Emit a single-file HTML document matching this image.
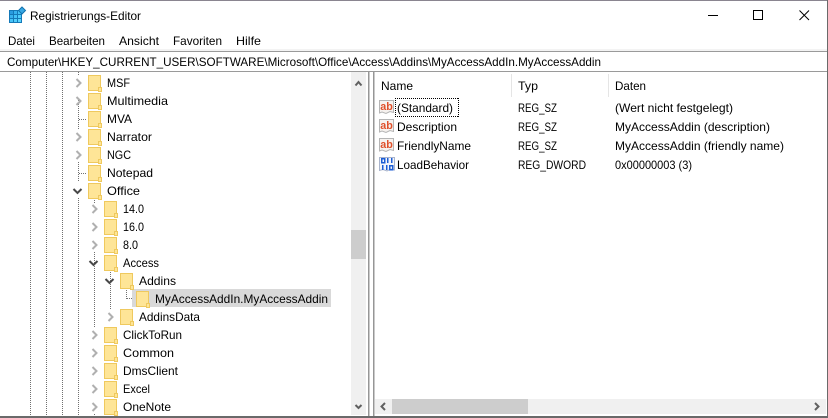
<!DOCTYPE html>
<html><head><meta charset="utf-8"><title>Registrierungs-Editor</title>
<style>html,body{margin:0;padding:0;background:#fff;width:828px;height:418px;overflow:hidden}
svg{display:block}text{font-family:"Liberation Sans",sans-serif;font-size:12px;fill:#000}</style></head><body>
<svg xmlns="http://www.w3.org/2000/svg" width="828" height="418" viewBox="0 0 828 418">
<defs>
<g id="f"><path d="M.5.5H12.5V15.500H.5Z" fill="#fee597" stroke="#efc95e"/><path d="M10.500 12.500H13.500V16.500H10.500Z" fill="#fee597" stroke="#efc95e"/></g>
<polyline id="c" points="0,0 4,4 0,8" fill="none" stroke="#b0b0b0" stroke-width="2"/>
<polyline id="e" points="0,0 4,4 8,0" fill="none" stroke="#484848" stroke-width="2"/>
<g id="ab"><path d="M.5 .5H14.500V12.500L11 11.500L7 13.500L3 12L.5 13Z" fill="#f6f2ef" stroke="#b5b5b5"/><text x="1.200" y="10" style="font-size:11px;font-weight:bold;fill:#e0502a" textLength="12.600" lengthAdjust="spacingAndGlyphs">ab</text></g>
</defs>
<rect width="828" height="418" fill="#fff"/>
<rect y="0" width="828" height="1" fill="#8a8590"/>
<rect y="49" width="827" height="2" fill="#f3f3f3"/>
<rect y="51" width="827" height="1" fill="#9a9a9a"/>
<rect y="71" width="827" height="1" fill="#9a9a9a"/>
<!-- title icon -->
<g shape-rendering="crispEdges">
<rect x="9" y="10" width="13" height="13" fill="#1579b8"/>
<rect x="10" y="11" width="3" height="3" fill="#2a9be0"/><rect x="14" y="11" width="3" height="3" fill="#38b2ef"/><rect x="18" y="11" width="3" height="3" fill="#45c3f8"/>
<rect x="10" y="15" width="3" height="3" fill="#38b2ef"/><rect x="14" y="15" width="3" height="3" fill="#45c3f8"/><rect x="18" y="15" width="3" height="3" fill="#50cdfb"/>
<rect x="10" y="19" width="3" height="3" fill="#45c3f8"/><rect x="14" y="19" width="3" height="3" fill="#50cdfb"/><rect x="18" y="19" width="3" height="3" fill="#5ad3fc"/>
</g>
<path d="M22 7L25.500 10.500L22 14L18.500 10.500Z" fill="#38a8e4" stroke="#1272ad"/>
<text x="30" y="20" textLength="111" lengthAdjust="spacingAndGlyphs">Registrierungs-Editor</text>
<!-- window buttons -->
<path d="M708 15.500H718" stroke="#000" shape-rendering="crispEdges"/>
<rect x="753.500" y="10.500" width="9" height="9" fill="none" stroke="#000" shape-rendering="crispEdges"/>
<path d="M799.500 10.500L809 20M809 10.500L799.500 20" stroke="#000" stroke-width="1"/>
<!-- menu -->
<text x="8" y="45" textLength="27" lengthAdjust="spacingAndGlyphs">Datei</text>
<text x="49" y="45" textLength="56" lengthAdjust="spacingAndGlyphs">Bearbeiten</text>
<text x="119" y="45" textLength="40" lengthAdjust="spacingAndGlyphs">Ansicht</text>
<text x="173" y="45" textLength="49" lengthAdjust="spacingAndGlyphs">Favoriten</text>
<text x="236" y="45" textLength="25" lengthAdjust="spacingAndGlyphs">Hilfe</text>
<text x="7" y="66" textLength="594" lengthAdjust="spacingAndGlyphs">Computer\HKEY_CURRENT_USER\SOFTWARE\Microsoft\Office\Access\Addins\MyAccessAddIn.MyAccessAddin</text>
<!-- dotted tree lines -->
<g stroke="#707070" stroke-dasharray="1 1" fill="none" shape-rendering="crispEdges">
<path d="M30.500 72V416M46.500 72V416M62.500 72V416M78.500 72V182M78.500 198V416"/>
<path d="M94.500 200V416M110.500 272V316M126.500 290V299M127 298.500H133M79 119.500H87M79 173.500H87"/>
</g>
<!-- selection -->
<rect x="132" y="289" width="199" height="18" fill="#d9d9d9"/>
<!-- chevrons -->
<rect x="72" y="76" width="12" height="22" fill="#fff"/><rect x="72" y="130" width="12" height="32" fill="#fff"/><rect x="88" y="204" width="12" height="48" fill="#fff"/><rect x="88" y="328" width="12" height="86" fill="#fff"/><rect x="104" y="310" width="12" height="14" fill="#fff"/>
<use href="#c" x="76.500" y="79"/><use href="#c" x="76.500" y="97"/><use href="#c" x="76.500" y="133"/><use href="#c" x="76.500" y="151"/>
<use href="#e" x="73.500" y="189"/>
<use href="#c" x="92.500" y="205"/><use href="#c" x="92.500" y="223"/><use href="#c" x="92.500" y="241"/>
<use href="#e" x="89.500" y="261"/><use href="#e" x="105.500" y="279"/>
<use href="#c" x="108.500" y="313"/>
<use href="#c" x="92.500" y="331"/><use href="#c" x="92.500" y="349"/><use href="#c" x="92.500" y="367"/><use href="#c" x="92.500" y="385"/><use href="#c" x="92.500" y="403"/>
<!-- folders -->
<use href="#f" x="88" y="75"/><use href="#f" x="88" y="93"/><use href="#f" x="88" y="111"/><use href="#f" x="88" y="129"/><use href="#f" x="88" y="147"/><use href="#f" x="88" y="165"/><use href="#f" x="88" y="183"/>
<use href="#f" x="104" y="201"/><use href="#f" x="104" y="219"/><use href="#f" x="104" y="237"/><use href="#f" x="104" y="255"/>
<use href="#f" x="120" y="273"/><use href="#f" x="136" y="291"/><use href="#f" x="120" y="309"/>
<use href="#f" x="104" y="327"/><use href="#f" x="104" y="345"/><use href="#f" x="104" y="363"/><use href="#f" x="104" y="381"/><use href="#f" x="104" y="399"/>
<!-- tree text -->
<text x="107" y="87" textLength="23" lengthAdjust="spacingAndGlyphs">MSF</text>
<text x="107" y="105" textLength="61" lengthAdjust="spacingAndGlyphs">Multimedia</text>
<text x="107" y="123" textLength="25" lengthAdjust="spacingAndGlyphs">MVA</text>
<text x="107" y="141" textLength="45" lengthAdjust="spacingAndGlyphs">Narrator</text>
<text x="107" y="159" textLength="24" lengthAdjust="spacingAndGlyphs">NGC</text>
<text x="107" y="177" textLength="46" lengthAdjust="spacingAndGlyphs">Notepad</text>
<text x="107" y="195" textLength="33" lengthAdjust="spacingAndGlyphs">Office</text>
<text x="123" y="213" textLength="21" lengthAdjust="spacingAndGlyphs">14.0</text>
<text x="123" y="231" textLength="21" lengthAdjust="spacingAndGlyphs">16.0</text>
<text x="123" y="249" textLength="15" lengthAdjust="spacingAndGlyphs">8.0</text>
<text x="123" y="267" textLength="36" lengthAdjust="spacingAndGlyphs">Access</text>
<text x="139" y="285" textLength="37" lengthAdjust="spacingAndGlyphs">Addins</text>
<text x="155" y="303" textLength="173" lengthAdjust="spacingAndGlyphs">MyAccessAddIn.MyAccessAddin</text>
<text x="139" y="321" textLength="61" lengthAdjust="spacingAndGlyphs">AddinsData</text>
<text x="123" y="339" textLength="59" lengthAdjust="spacingAndGlyphs">ClickToRun</text>
<text x="123" y="357" textLength="51" lengthAdjust="spacingAndGlyphs">Common</text>
<text x="123" y="375" textLength="55" lengthAdjust="spacingAndGlyphs">DmsClient</text>
<text x="123" y="393" textLength="27" lengthAdjust="spacingAndGlyphs">Excel</text>
<text x="123" y="411" textLength="48" lengthAdjust="spacingAndGlyphs">OneNote</text>
<!-- vertical scrollbar -->
<rect x="351" y="72" width="15" height="343" fill="#f0f0f0"/>
<rect x="351" y="230" width="15" height="29" fill="#cdcdcd"/>
<polyline points="355.500,85.500 358.500,82 361.500,85.500" fill="none" stroke="#606060" stroke-width="2"/>
<polyline points="355.500,405 358.500,408 361.500,405" fill="none" stroke="#606060" stroke-width="2"/>
<!-- splitter -->
<rect x="368" y="72" width="1.500" height="346" fill="#969696"/>
<rect x="373" y="72" width="1.500" height="344" fill="#969696"/>
<!-- list header -->
<rect x="511" y="74" width="1" height="23" fill="#e5e5e5"/>
<rect x="608" y="74" width="1" height="23" fill="#e5e5e5"/>
<text x="381" y="90" textLength="32" lengthAdjust="spacingAndGlyphs">Name</text>
<text x="518" y="90" textLength="20" lengthAdjust="spacingAndGlyphs">Typ</text>
<text x="615" y="90" textLength="31" lengthAdjust="spacingAndGlyphs">Daten</text>
<!-- list icons -->
<use href="#ab" x="379" y="100"/><use href="#ab" x="379" y="119"/><use href="#ab" x="379" y="138"/>
<g>
<path d="M379.500 157.500H394.500V170L391 169L387 171L383 169.500L379.500 170.500Z" fill="#f3f5fb" stroke="#a9b4cc"/>
<g fill="none" stroke="#1d5ed6" stroke-width="1.500" shape-rendering="crispEdges">
<rect x="381.500" y="158.500" width="3" height="4"/><path d="M387.500 158V163M391.500 158V163"/>
<path d="M382.500 165V170M386.500 165V170"/><rect x="389.500" y="165.500" width="3" height="4"/>
</g></g>
<path d="M395 98.500H459M395 116.500H459M395.500 98V117M458.500 98V117" fill="none" stroke="#000" stroke-dasharray="1 1" shape-rendering="crispEdges"/>
<!-- list text -->
<text x="397" y="112" textLength="56" lengthAdjust="spacingAndGlyphs">(Standard)</text>
<text x="397" y="131" textLength="60" lengthAdjust="spacingAndGlyphs">Description</text>
<text x="397" y="150" textLength="74" lengthAdjust="spacingAndGlyphs">FriendlyName</text>
<text x="397" y="169" textLength="72" lengthAdjust="spacingAndGlyphs">LoadBehavior</text>
<text x="518" y="112" textLength="39" lengthAdjust="spacingAndGlyphs">REG_SZ</text>
<text x="518" y="131" textLength="39" lengthAdjust="spacingAndGlyphs">REG_SZ</text>
<text x="518" y="150" textLength="39" lengthAdjust="spacingAndGlyphs">REG_SZ</text>
<text x="518" y="169" textLength="68" lengthAdjust="spacingAndGlyphs">REG_DWORD</text>
<text x="615" y="112" textLength="118" lengthAdjust="spacingAndGlyphs">(Wert nicht festgelegt)</text>
<text x="615" y="131" textLength="155" lengthAdjust="spacingAndGlyphs">MyAccessAddin (description)</text>
<text x="615" y="150" textLength="169" lengthAdjust="spacingAndGlyphs">MyAccessAddin (friendly name)</text>
<text x="615" y="169" textLength="77" lengthAdjust="spacingAndGlyphs">0x00000003 (3)</text>
<!-- horizontal scrollbar -->
<rect x="375" y="399" width="451" height="15" fill="#f0f0f0"/>
<rect x="392" y="399" width="136" height="15" fill="#cdcdcd"/>
<polyline points="385,403 381.500,406.500 385,410" fill="none" stroke="#606060" stroke-width="2"/>
<polyline points="815,403 818.500,406.500 815,410" fill="none" stroke="#606060" stroke-width="2"/>
<!-- window frame -->
<rect x="0" y="416" width="828" height="2" fill="#6a6a6a"/>
<rect x="827" y="0" width="1" height="418" fill="#6a6a6a"/>
</svg>
</body></html>
